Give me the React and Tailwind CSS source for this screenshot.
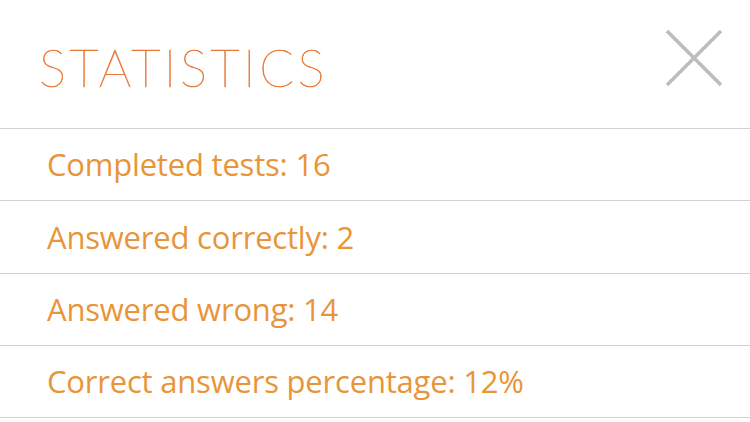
export default function App() {
  const rows = [
    'Completed tests: 16',
    'Answered correctly: 2',
    'Answered wrong: 14',
    'Correct answers percentage: 12%',
  ];
  return (
    <div className="w-[750px] h-[422px] bg-white overflow-hidden font-['Open_Sans',sans-serif]">
      <div className="h-[128px] flex items-start justify-between">
        <h1 className="ml-[39px] mt-[42px] text-[51px] leading-[52px] font-thin tracking-[3.6px] text-[#e8793a] [-webkit-text-stroke:0.6px_#e8793a] font-['Lato',sans-serif]">
          STATISTICS
        </h1>
        <svg className="mr-[26px] mt-[28px]" width="60" height="60" viewBox="0 0 60 60">
          <path d="M3 3 L57 57 M57 3 L3 57" stroke="#bdbdbd" strokeWidth="3.5" fill="none" />
        </svg>
      </div>
      <div className="border-t-[1.5px] border-[#d2d2d2]">
        {rows.map((r) => (
          <div key={r} className="h-[71.25px] box-content flex items-center border-b-[1.5px] border-[#d2d2d2]">
            <span className="ml-[47px] text-[31px] tracking-[-0.2px] text-[#e8953a]">{r}</span>
          </div>
        ))}
      </div>
    </div>
  );
}
